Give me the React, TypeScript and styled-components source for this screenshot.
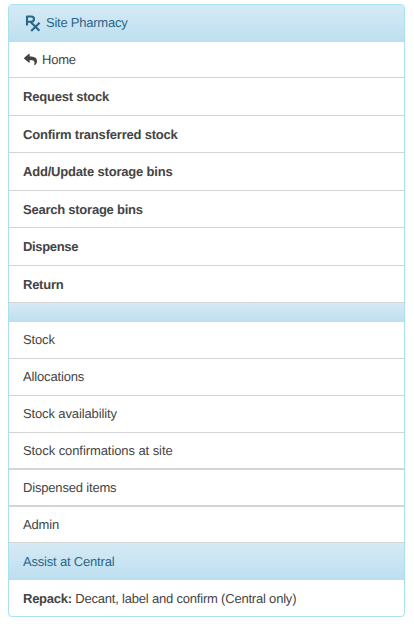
import React from "react";
import styled, { createGlobalStyle } from "styled-components";
import { FaReply } from "react-icons/fa";

const GlobalStyle = createGlobalStyle`
  body {
    margin: 0;
    background: #fff;
    color: #444;
    font: 13px/20px "Liberation Sans", Arial, sans-serif;
    text-rendering: geometricPrecision;
  }
`;

const Panel = styled.nav`
  box-sizing: border-box;
  width: 397px;
  margin: 4px 0 0 8px;
  border: 1px solid #a9e1ec;
  border-radius: 4px;
  overflow: hidden;
  box-shadow: 0 1px 1px rgba(0, 0, 0, 0.05);
`;

const Heading = styled.div<{ $height: number; $bottom?: number }>`
  box-sizing: border-box;
  display: flex;
  align-items: center;
  height: ${(p) => p.$height}px;
  padding: 0 14px ${(p) => p.$bottom ?? 0}px;
  color: #2b6688;
  background: linear-gradient(#d6eaf5, #bcdff0);
`;

const Row = styled.a<{ $height: number; $line?: number; $top?: number }>`
  box-sizing: border-box;
  display: flex;
  align-items: center;
  height: ${(p) => p.$height}px;
  padding: ${(p) => p.$top ?? 0}px 14px 0;
  border-bottom: ${(p) => p.$line ?? 1}px solid #d5d5d5;
`;

const Label = styled.span<{ $spacing?: number }>`
  white-space: pre;
  letter-spacing: ${(p) => p.$spacing ?? 0}px;
`;

const Strong = styled.strong`
  font-weight: 700;
  letter-spacing: -0.25px;
`;

const RxIcon = styled.svg`
  width: 16px;
  height: 18px;
  margin: 0 5px 0 2px;
`;

const ReplyIcon = styled(FaReply)`
  width: 13px;
  height: 13px;
  margin: 0 5px 0 1px;
`;

const actions = [
  { text: "Request stock", height: 38, top: 0, spacing: -0.21 },
  { text: "Confirm transferred stock", height: 37, top: 2, spacing: -0.2 },
  { text: "Add/Update storage bins", height: 38, top: 0, spacing: -0.19 },
  { text: "Search storage bins", height: 37, top: 2, spacing: -0.24 },
  { text: "Dispense", height: 38, top: 0, spacing: -0.33 },
  { text: "Return", height: 37, top: 2, spacing: -0.25 },
];

const pages = [
  { text: "Stock", height: 37, line: 1, spacing: -0.15 },
  { text: "Allocations", height: 37, line: 1, spacing: -0.15 },
  { text: "Stock availability", height: 37, line: 1, spacing: -0.13 },
  { text: "Stock confirmations at site", height: 37, line: 2, spacing: -0.08 },
  { text: "Dispensed items", height: 37, line: 2, spacing: -0.18 },
  { text: "Admin", height: 36, line: 1, spacing: -0.15 },
];

export default function App() {
  return (
    <>
      <GlobalStyle />
      <Panel>
        <Heading $height={37} $bottom={2}>
          <RxIcon viewBox="0 0 16 18" fill="none" stroke="currentColor" strokeWidth="2.1">
            <path d="M2 11.5V2.5h4.4a2.6 2.6 0 0 1 0 5.2H2M5.4 7.7l9 9M14.6 8.7l-8.4 8.4" strokeLinejoin="round" />
          </RxIcon>
          <Label $spacing={-0.24}>Site Pharmacy</Label>
        </Heading>
        <Row $height={36}>
          <ReplyIcon />
          <Label $spacing={-0.2}>Home</Label>
        </Row>
        {actions.map((a) => (
          <Row key={a.text} $height={a.height} $top={a.top}>
            <Label as="strong" $spacing={a.spacing}>{a.text}</Label>
          </Row>
        ))}
        <Heading $height={19} />
        {pages.map((p) => (
          <Row key={p.text} $height={p.height} $line={p.line}>
            <Label $spacing={p.spacing}>{p.text}</Label>
          </Row>
        ))}
        <Heading $height={37}>
          <Label $spacing={-0.19}>Assist at Central</Label>
        </Heading>
        <Row $height={36} $line={0} $top={2}>
          <Label $spacing={-0.2}>
            <Strong>Repack:</Strong> Decant, label and confirm (Central only)
          </Label>
        </Row>
      </Panel>
    </>
  );
}
